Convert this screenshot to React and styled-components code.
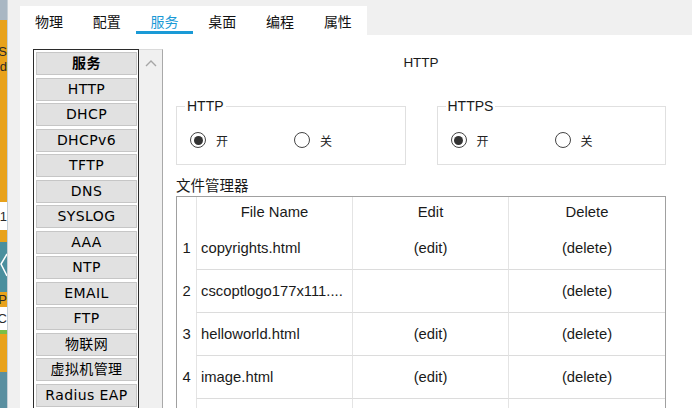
import React from "react";
import styled, { createGlobalStyle } from "styled-components";

const GlobalStyle = createGlobalStyle`
  html, body {
    margin: 0;
    padding: 0;
  }
  body {
    width: 692px;
    height: 408px;
    overflow: hidden;
    background: #f0f0f0;
    font-family: "Liberation Sans", "Noto Sans CJK SC", sans-serif;
    color: #1a1a1a;
  }
`;

const Page = styled.div`
  display: flex;
  width: 692px;
  height: 408px;
  overflow: hidden;
`;

/* strip of the window behind, visible at the left edge */
const BackStrip = styled.div`
  width: 7px;
  flex: none;
  display: flex;
  flex-direction: column;
  border-right: 1px solid #c6cfd6;
  overflow: hidden;
`;

const BackBlock = styled.div`
  height: ${(p) => p.h}px;
  flex: none;
  background: ${(p) => p.bg};
  padding-top: ${(p) => p.pt || 0}px;
  box-sizing: border-box;
  overflow: hidden;
  white-space: nowrap;
  text-align: right;
  direction: rtl;
  font-size: 13px;
  line-height: 15px;
  color: #2a2a2a;
`;

const Window = styled.div`
  flex: 1;
  display: flex;
  flex-direction: column;
  padding-left: 12px;
  background: #f0f0f0;
  min-width: 0;
`;

const TabBar = styled.div`
  margin-top: 6px;
  width: 347px;
  height: 29px;
  display: flex;
  background: #fff;
`;

const Tab = styled.div`
  width: 57.8px;
  height: 28px;
  box-sizing: border-box;
  padding-top: 6px;
  line-height: 18px;
  text-align: center;
  font-family: "Noto Sans CJK SC", sans-serif;
  font-size: 14px;
  color: ${(p) => (p.active ? "#1a9ad6" : "#111")};
  border-bottom: 3px solid ${(p) => (p.active ? "#1a9ad6" : "transparent")};
`;

const Content = styled.div`
  flex: 1;
  display: flex;
  background: #fff;
  min-height: 0;
`;

const Sidebar = styled.div`
  display: flex;
  padding: 14px 0 0 13px;
`;

const ServiceList = styled.div`
  width: 101px;
  padding: 2px 1px 0 2px;
  border: 1px solid #2b2b2b;
  border-bottom: none;
  overflow: hidden;
`;

const ServiceItem = styled.div`
  height: 23px;
  box-sizing: border-box;
  margin-bottom: 2.5px;
  border: 1px solid #c6c6c6;
  background: #e1e1e1;
  text-align: center;
  line-height: 21px;
  font-family: "DejaVu Sans", "Noto Sans CJK SC", sans-serif;
  font-size: 14px;
  letter-spacing: 0.4px;
  font-weight: ${(p) => (p.head ? 700 : 400)};
  color: #000;
  white-space: nowrap;
`;

const ScrollTrack = styled.div`
  width: 24px;
  box-sizing: border-box;
  background: #f0f0f0;
  border-top: 1px solid #dadada;
  border-right: 1px solid #a9a9a9;
  display: flex;
  justify-content: center;
  padding-top: 9px;
`;

const Main = styled.div`
  flex: 1;
  padding-left: 13px;
`;

const Panel = styled.div`
  width: 490px;
`;

const Title = styled.div`
  padding-top: 19px;
  line-height: 18px;
  text-align: center;
  font-size: 13.5px;
  color: #1a1a1a;
`;

const FieldRow = styled.div`
  display: flex;
  gap: 31px;
  margin-top: 26px;
`;

const Group = styled.fieldset`
  width: 230px;
  box-sizing: border-box;
  margin: 0;
  min-width: 0;
  border: 1px solid #e0e0e0;
  padding: 14px 0 12px 13px;
`;

const Legend = styled.legend`
  margin-left: -5px;
  padding: 0 2px;
  line-height: 16px;
  font-size: 14px;
  color: #1a1a1a;
`;

const RadioRow = styled.div`
  display: flex;
  align-items: center;
  height: 24px;
`;

const RadioOption = styled.label`
  display: flex;
  align-items: center;
  width: 104px;
  font-family: "Noto Sans CJK SC", sans-serif;
  font-size: 12px;
  color: #222;
`;

const RadioCircle = styled.span`
  width: 16px;
  height: 16px;
  box-sizing: border-box;
  border-radius: 50%;
  border: 1px solid #444;
  background: #fff;
  margin-right: 10px;
  display: flex;
  align-items: center;
  justify-content: center;

  &::after {
    content: "";
    width: 9px;
    height: 9px;
    border-radius: 50%;
    background: ${(p) => (p.checked ? "#333" : "transparent")};
  }
`;

const FileLabel = styled.div`
  margin-top: 11px;
  line-height: 18px;
  font-family: "Noto Sans CJK SC", sans-serif;
  font-size: 14.5px;
  color: #1a1a1a;
`;

const FileTable = styled.div`
  margin-top: 2px;
  width: 490px;
  box-sizing: border-box;
  border: 1px solid #a0a0a0;
  border-bottom: none;
  display: grid;
  grid-template-columns: 19px 156px 156px 1fr;
  font-size: 14.8px;
  color: #1a1a1a;
`;

const HeadCell = styled.div`
  height: 30px;
  line-height: 30px;
  text-align: center;
  border-left: ${(p) => (p.first ? "none" : "1px solid #e4e4e4")};
`;

const Cell = styled.div`
  height: 43px;
  box-sizing: border-box;
  line-height: 43px;
  white-space: nowrap;
  overflow: hidden;
  text-align: ${(p) => p.align || "center"};
  padding-left: ${(p) => (p.align === "left" ? "4px" : "0")};
  border-left: ${(p) => (p.num ? "none" : "1px solid #e4e4e4")};
  border-bottom: ${(p) => (p.num ? "none" : "1px solid #dcdcdc")};
`;

const tabs = ["物理", "配置", "服务", "桌面", "编程", "属性"];

const services = [
  "服务",
  "HTTP",
  "DHCP",
  "DHCPv6",
  "TFTP",
  "DNS",
  "SYSLOG",
  "AAA",
  "NTP",
  "EMAIL",
  "FTP",
  "物联网",
  "虚拟机管理",
  "Radius EAP",
];

const files = [
  { name: "copyrights.html", edit: true },
  { name: "cscoptlogo177x111....", edit: false },
  { name: "helloworld.html", edit: true },
  { name: "image.html", edit: true },
  { name: "", edit: false },
];

const RadioGroup = ({ legend }) => (
  <Group>
    <Legend>{legend}</Legend>
    <RadioRow>
      <RadioOption>
        <RadioCircle checked />
        开
      </RadioOption>
      <RadioOption>
        <RadioCircle />
        关
      </RadioOption>
    </RadioRow>
  </Group>
);

export default function App() {
  return (
    <>
      <GlobalStyle />
      <Page>
        <BackStrip>
          <BackBlock h={20} bg="#a9b7c3" />
          <BackBlock h={182} bg="#e8a21c" pt={24}>
            S<br />d
          </BackBlock>
          <BackBlock h={28} bg="#ffffff" pt={7}>
            1
          </BackBlock>
          <BackBlock h={12} bg="#e8a21c" />
          <BackBlock h={50} bg="#4a8f9e" pt={8}>
            <svg width="7" height="30" viewBox="0 0 7 30">
              <path d="M7 4 L1 14 L7 26" stroke="#fff" strokeWidth="1.5" fill="none" />
            </svg>
          </BackBlock>
          <BackBlock h={15} bg="#e8a21c">
            P/
          </BackBlock>
          <BackBlock h={23} bg="#ffffff" pt={4}>
            C
          </BackBlock>
          <BackBlock h={4} bg="#79bf48" />
          <BackBlock h={38} bg="#e8a21c" />
          <BackBlock h={36} bg="#5a8fa0" />
        </BackStrip>
        <Window>
          <TabBar>
            {tabs.map((t) => (
              <Tab key={t} active={t === "服务"}>
                {t}
              </Tab>
            ))}
          </TabBar>
          <Content>
            <Sidebar>
              <ServiceList>
                {services.map((s, i) => (
                  <ServiceItem key={s} head={i === 0}>
                    {s}
                  </ServiceItem>
                ))}
              </ServiceList>
              <ScrollTrack>
                <svg width="12" height="8" viewBox="0 0 12 8">
                  <path d="M1 7 L6 2 L11 7" stroke="#a6a6a6" strokeWidth="1.4" fill="none" />
                </svg>
              </ScrollTrack>
            </Sidebar>
            <Main>
              <Panel>
                <Title>HTTP</Title>
                <FieldRow>
                  <RadioGroup legend="HTTP" />
                  <RadioGroup legend="HTTPS" />
                </FieldRow>
                <FileLabel>文件管理器</FileLabel>
                <FileTable>
                  <HeadCell first />
                  <HeadCell>File Name</HeadCell>
                  <HeadCell>Edit</HeadCell>
                  <HeadCell>Delete</HeadCell>
                  {files.map((f, i) => (
                    <React.Fragment key={i}>
                      <Cell num>{f.name ? i + 1 : ""}</Cell>
                      <Cell align="left">{f.name}</Cell>
                      <Cell>{f.edit ? "(edit)" : ""}</Cell>
                      <Cell>{f.name ? "(delete)" : ""}</Cell>
                    </React.Fragment>
                  ))}
                </FileTable>
              </Panel>
            </Main>
          </Content>
        </Window>
      </Page>
    </>
  );
}
